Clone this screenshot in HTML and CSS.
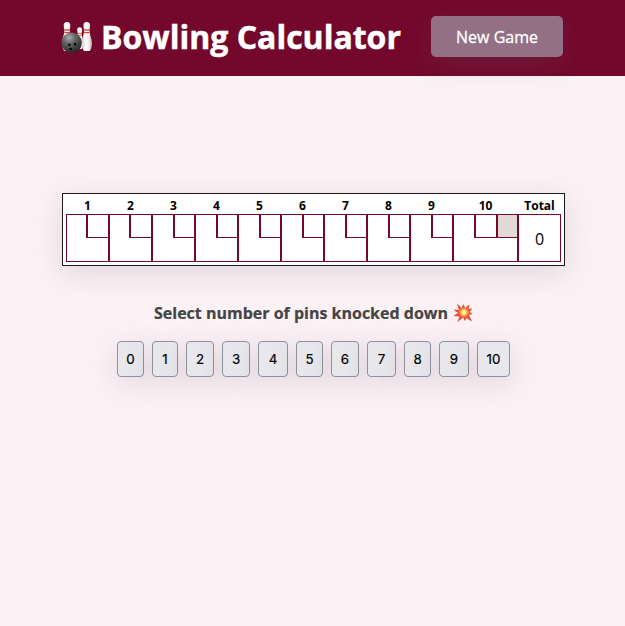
FILE: index.html
```html
<!DOCTYPE html>
<html lang="en">
<head>
<meta charset="utf-8">
<title>Bowling Calculator</title>
<link rel="stylesheet" href="styles.css">
</head>
<body>
<header class="header">
  <h1 class="title">
    <svg class="bowling" viewBox="0 0 34 34" aria-hidden="true">
      <defs>
        <linearGradient id="pin"><stop offset="0" stop-color="#c9c7c8"/><stop offset=".35" stop-color="#fff"/><stop offset=".7" stop-color="#f0eeee"/><stop offset="1" stop-color="#aaa5a8"/></linearGradient>
        <radialGradient id="ball" cx=".38" cy=".25" r=".75"><stop offset="0" stop-color="#aaa"/><stop offset=".4" stop-color="#666"/><stop offset="1" stop-color="#292929"/></radialGradient>
        <g id="skittle">
          <path d="M5 0C2.600 0 1.400 1.700 1.600 4C1.800 7 2.700 8.500 2 12C1 16 0 18 0 22C0 26 1.500 30 2.500 30H8C9 30 10.500 26 10.500 22C10.500 18 9 16 8.300 12C7.600 8.500 8.300 7 8.500 4C8.600 1.700 7.400 0 5 0Z" fill="url(#pin)"/>
          <path d="M2.200 8Q5 9 7.900 8M2.300 10.600Q5 11.600 8.100 10.600" fill="none" stroke="#dc4437" stroke-width="1.300"/>
        </g>
      </defs>
      <use href="#skittle" x="2.200" y="2"/>
      <use href="#skittle" transform="translate(16.500 7.500) scale(.75)"/>
      <use href="#skittle" x="22.500" y="2"/>
      <circle cx="12" cy="23.400" r="10.500" fill="url(#ball)"/>
      <g fill="#080808"><ellipse cx="9.600" cy="25.600" rx="1.300" ry="1.500"/><ellipse cx="15.500" cy="25" rx="1.300" ry="1.500"/><ellipse cx="11" cy="29.800" rx="1.600" ry="1.300"/></g>
    </svg>
    <span>Bowling Calculator</span>
  </h1>
  <button class="new-game">New Game</button>
</header>
<main class="main">
  <section class="board">
    <div class="frame"><b class="label">1</b><div class="cell"><i class="roll"></i></div></div>
    <div class="frame"><b class="label">2</b><div class="cell"><i class="roll"></i></div></div>
    <div class="frame"><b class="label">3</b><div class="cell"><i class="roll"></i></div></div>
    <div class="frame"><b class="label">4</b><div class="cell"><i class="roll"></i></div></div>
    <div class="frame"><b class="label">5</b><div class="cell"><i class="roll"></i></div></div>
    <div class="frame"><b class="label">6</b><div class="cell"><i class="roll"></i></div></div>
    <div class="frame"><b class="label">7</b><div class="cell"><i class="roll"></i></div></div>
    <div class="frame"><b class="label">8</b><div class="cell"><i class="roll"></i></div></div>
    <div class="frame"><b class="label">9</b><div class="cell"><i class="roll"></i></div></div>
    <div class="frame"><b class="label">10</b><div class="cell"><i class="roll second"></i><i class="roll bonus"></i></div></div>
    <div class="frame"><b class="label">Total</b><div class="cell total">0</div></div>
  </section>
  <h2 class="prompt">Select number of pins knocked down
    <svg class="boom" viewBox="0 0 20 20" aria-hidden="true">
      <defs><radialGradient id="flash" cx=".55" cy=".48" r=".5"><stop offset="0" stop-color="#fffde0"/><stop offset=".2" stop-color="#ffe77e"/><stop offset=".38" stop-color="#f69a49"/><stop offset=".6" stop-color="#e94e32"/><stop offset="1" stop-color="#df3b2b"/></radialGradient></defs>
      <path fill="url(#flash)" d="M4 .5L8.500 5L10.500 1L12 5L16.500 1.500L15.500 6L19.500 5.500L16.500 9L19.500 11L16 12L19 18.500L13.500 15L12 18L10 14.500L4.500 19L6.500 13.500L.5 13L5 10L.5 6.500L6 7Z"/>
    </svg>
  </h2>
  <div class="pins">
    <button class="pin">0</button><button class="pin">1</button><button class="pin">2</button><button class="pin">3</button><button class="pin">4</button><button class="pin">5</button><button class="pin">6</button><button class="pin">7</button><button class="pin">8</button><button class="pin">9</button><button class="pin">10</button>
  </div>
</main>
</body>
</html>
```
FILE: styles.css
```css
* { box-sizing: border-box; }
body {
  margin: 0;
  min-height: 626px;
  background: #fcf2f6;
  font-family: "Open Sans", sans-serif;
}
.header {
  display: flex;
  align-items: center;
  height: 76px;
  padding: 0 62px 3px 60px;
  background: #73082c;
}
.title {
  display: flex;
  align-items: center;
  gap: 8px;
  width: 371px;
  margin: 0;
  color: #fff;
  font-size: 32px;
  line-height: 44px;
  white-space: nowrap;
  -webkit-text-stroke: .5px #fff;
}
.bowling { flex: none; width: 33px; height: 33px; -webkit-text-stroke: 0; }
.new-game {
  width: 132px;
  height: 41px;
  padding: 0;
  border: 0;
  border-radius: 5px;
  background: #937084;
  color: #fff;
  font: 500 16px "Open Sans", sans-serif;
  -webkit-text-stroke: .3px #fff;
  box-shadow: 0 7px 29px rgba(100, 100, 111, .2);
}
.main {
  display: flex;
  flex-direction: column;
  align-items: center;
  padding: 117px 0 0 2px;
}
.board {
  display: grid;
  grid-template-columns: repeat(9, 43px) 65px 43px;
  width: 503px;
  height: 73px;
  padding: 3px;
  border: 1px solid #1d1820;
  background: #fff;
  box-shadow: 0 7px 29px rgba(100, 100, 111, .2);
}
.frame { display: flex; flex-direction: column; }
.label {
  height: 17px;
  color: #000;
  font-size: 12px;
  line-height: 18px;
  text-align: center;
}
.cell {
  display: flex;
  justify-content: flex-end;
  height: 48px;
  border: 1px solid #73082c;
}
.roll {
  width: 22px;
  height: 23px;
  border: solid #73082c;
  border-width: 0 0 1px 2px;
}
.frame:nth-child(n+3) .roll { width: 21px; }
.frame .roll.second { width: 22px; }
.bonus { background: #e1d9d4; }
.total {
  justify-content: center;
  align-items: center;
  padding-top: 2px;
  color: #000;
  font-size: 16px;
}
.prompt {
  display: flex;
  align-items: center;
  gap: 5px;
  height: 24px;
  margin: 35px 0 16px;
  color: #444;
  font-size: 16px;
  line-height: 22px;
  -webkit-text-stroke: .2px #444;
}
.boom { width: 20px; height: 20px; }
.pins {
  display: grid;
  grid-template-columns: 27px 26px 28px 28px 30px 27px 28px 29px 27px 30px 33px;
  gap: 8px;
}
.pin {
  height: 36px;
  padding: 0;
  border: 1px solid #8f90a0;
  border-radius: 4px;
  background: #e8e8ec;
  color: #000;
  font: 400 13.333px Inter, sans-serif;
  -webkit-text-stroke: .2px #000;
  box-shadow: 0 7px 29px rgba(100, 100, 111, .2);
}
```
